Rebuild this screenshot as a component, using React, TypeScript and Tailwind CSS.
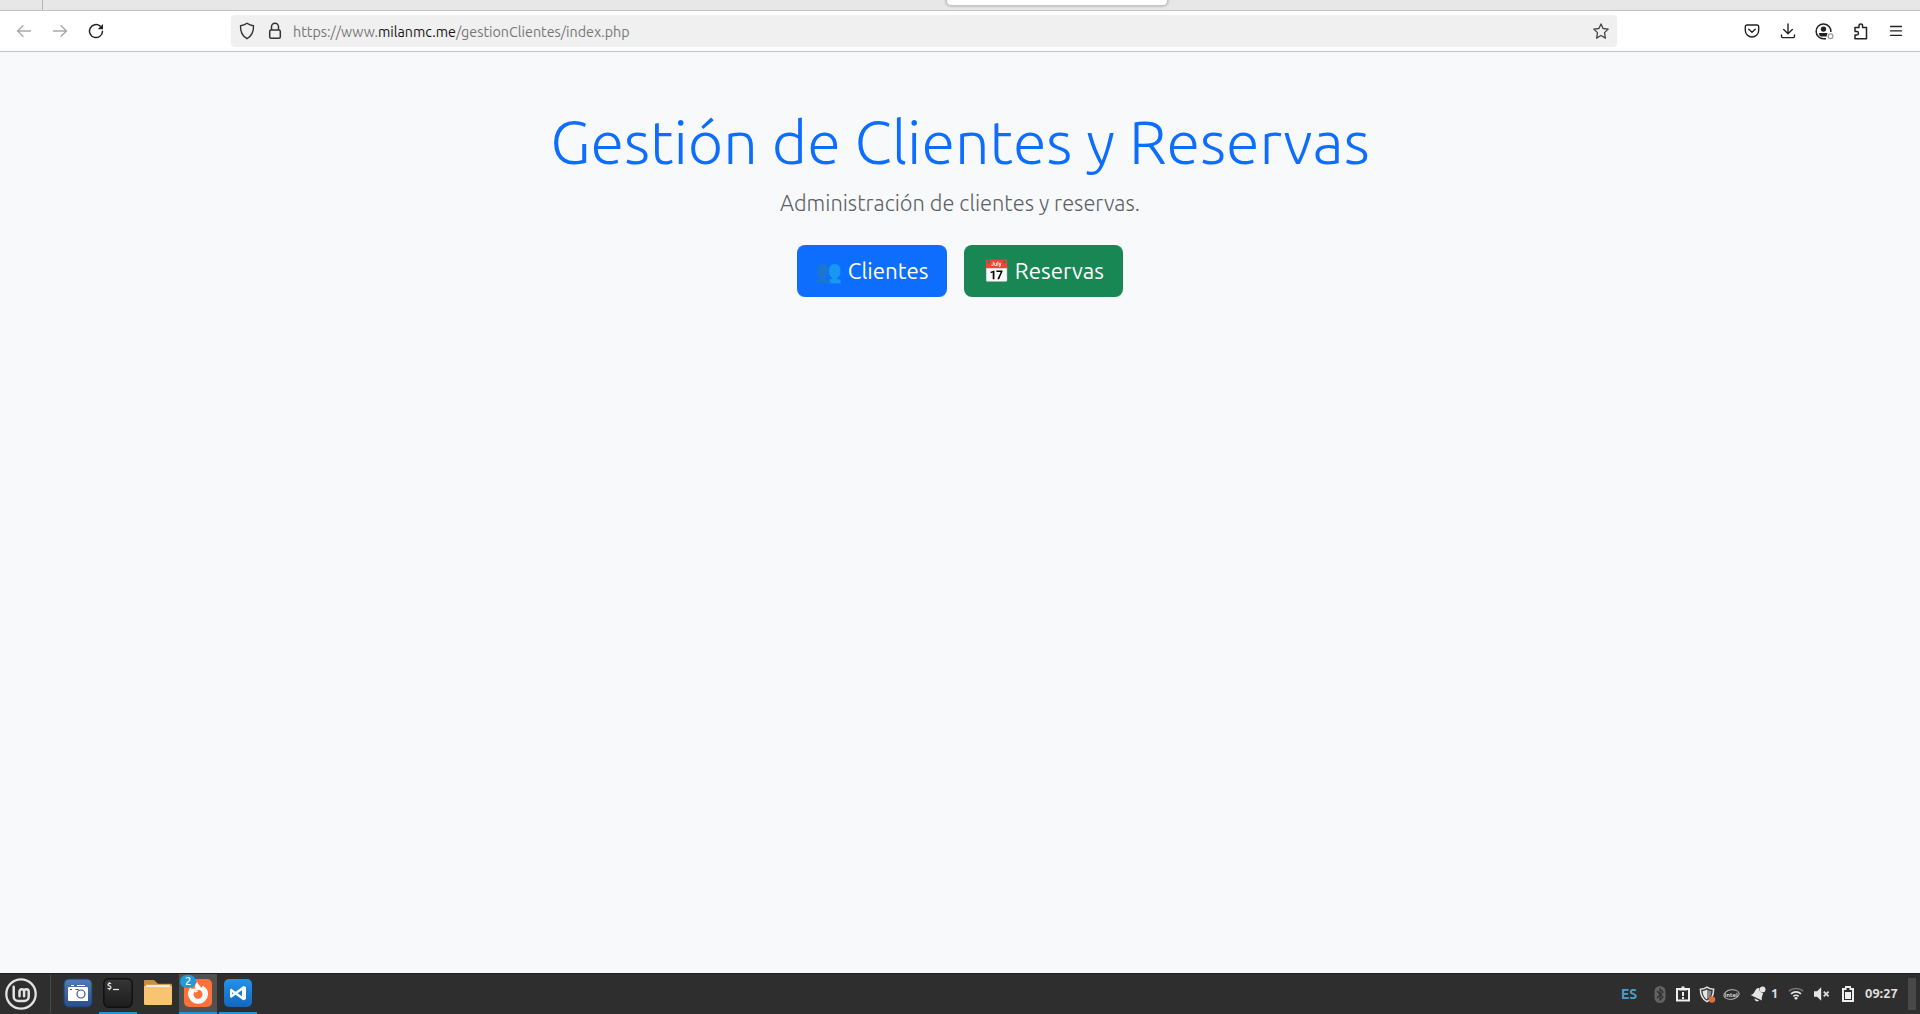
import React from "react";

function BrowserBar() {
  return (
    <header className="h-[52px] shrink-0 bg-white">
      <div className="relative h-[11px] overflow-hidden border-b border-[#c3c3c3] bg-[#e7e7e7]">
        <div className="ml-[42px] h-[10px] w-px bg-[#b5b5b5]" />
        <div className="absolute -top-5 left-[946px] h-[26px] w-[222px] rounded-[5px] border border-[#c4c4c4] bg-white shadow-[0_0_3px_rgba(0,0,0,0.3)]" />
      </div>
      <div className="flex h-[41px] items-center border-b border-[#c3c3c3]">
        <nav className="flex w-[231px] items-center gap-5 pl-4">
          <svg width="16" height="16" viewBox="0 0 16 16" fill="none" stroke="#a9a9a9" strokeWidth="1.4" strokeLinecap="round" strokeLinejoin="round"><path d="M14.5 8H1.7M7 2.7 1.5 8 7 13.3" /></svg>
          <svg width="16" height="16" viewBox="0 0 16 16" fill="none" stroke="#a9a9a9" strokeWidth="1.4" strokeLinecap="round" strokeLinejoin="round"><path d="M1.5 8h12.8M9 2.7 14.5 8 9 13.3" /></svg>
          <svg width="16" height="16" viewBox="0 0 16 16" fill="none" stroke="#222" strokeWidth="1.5" strokeLinecap="round"><path d="M12.2 3.1A6.5 6.5 0 1 0 14.5 8.2" /><path d="M15 1v5.3H9.7z" fill="#222" stroke="none" /></svg>
        </nav>
        <div className="flex h-8 w-[1386px] items-center rounded bg-[#f0f0f0] pl-2 pr-2">
          <svg width="16" height="18" viewBox="0 0 16 18" fill="none" stroke="#333" strokeWidth="1.4" strokeLinejoin="round"><path d="M8 1.2c2 1.5 4.2 2.3 6.5 2.6.2 5.3-1.2 9.9-6.5 12.9C2.700 13.700 1.300 9.100 1.500 3.800 3.800 3.500 6 2.700 8 1.200z" /></svg>
          <svg className="ml-3" width="16" height="18" viewBox="0 0 16 18" fill="none" stroke="#333" strokeWidth="1.5"><rect x="2.700" y="8" width="10.600" height="8.300" rx="1.500" /><path d="M4.500 8V4.700a3.500 3.500 0 0 1 7 0V8" /></svg>
          <span className="ml-[10px] whitespace-nowrap pt-[2px] text-[14.3px] leading-5 text-[#777]">https://www.<span className="text-[#161616]">milanmc.me</span>/gestionClientes/index.php</span>
          <svg className="ml-auto" width="16" height="16" viewBox="0 0 16 16" fill="none" stroke="#444" strokeWidth="1.3" strokeLinejoin="round"><path d="m8 .9 2.100 4.600 5.100.6-3.700 3.500.9 5.500L8 12.500l-4.400 2.600.9-5.500L.8 6.100l5.100-.6z" /></svg>
        </div>
        <div className="flex items-center gap-5 pl-[127px]">
          <svg width="16" height="16" viewBox="0 0 16 16" fill="none" stroke="#222" strokeWidth="1.400" strokeLinecap="round" strokeLinejoin="round"><path d="M3 2h10a1.700 1.700 0 0 1 1.700 1.700v3.600a6.700 6.700 0 0 1-13.400 0V3.700A1.700 1.700 0 0 1 3 2z" /><path d="m4.700 6.300 3.300 3 3.300-3" /></svg>
          <svg width="16" height="16" viewBox="0 0 16 16" fill="none" stroke="#222" strokeWidth="1.400" strokeLinecap="round" strokeLinejoin="round"><path d="M8 1v9.700M3.700 6.500 8 10.800l4.300-4.300M1.500 12v1.300A1.300 1.300 0 0 0 2.800 14.600h10.400a1.300 1.300 0 0 0 1.300-1.300V12" /></svg>
          <svg className="-ml-px mr-px" width="19" height="17" viewBox="0 0 19 17" fill="none"><path d="M15.900 9A7.400 7.400 0 1 0 9 15.700h2" stroke="#222" strokeWidth="1.500" /><circle cx="8.500" cy="6.100" r="2.700" fill="#222" /><path d="M4 10h8.500l-1 3.500H6C4.500 13.500 3.900 11 4 10z" fill="#222" /><circle cx="15.500" cy="13.200" r="2.400" stroke="#999" strokeWidth="1.200" fill="#fff" /></svg>
          <svg className="-ml-[2px]" width="16" height="17" viewBox="0 0 16 17" fill="none" stroke="#222" strokeWidth="1.500" strokeLinejoin="round"><path d="M2 5.500V4.600H6V2.900a1.800 1.800 0 0 1 3.600 0v1.700h3.900v11.200H2v-3.900h1.800a1.600 1.600 0 0 0 0-3.300H2z" /></svg>
          <svg className="-ml-px" width="16" height="16" viewBox="0 0 16 16" stroke="#222" strokeWidth="1.300" strokeLinecap="round"><path d="M2.500 3.500h11M2.500 7.900h11M2.500 12.300h11" /></svg>
        </div>
      </div>
    </header>
  );
}

function Taskbar() {
  return (
    <footer className="flex h-[41px] shrink-0 items-stretch border-t border-[#202020] bg-[#2e2e2e]">
      <div className="flex w-[50px] items-center pl-[5px]">
        <svg width="32" height="32" viewBox="0 0 32 32" fill="none" stroke="#e3e3e3" strokeLinecap="round" strokeLinejoin="round"><circle cx="16" cy="16" r="14.700" strokeWidth="2.300" /><path d="M8.700 8.700v9.800a4.500 4.500 0 0 0 4.500 4.500h6a4.500 4.500 0 0 0 4.500-4.500v-5a2.300 2.300 0 0 0-4.600 0v4.700M19.100 13.500a2.300 2.300 0 0 0-4.600 0v4.700" strokeWidth="2.500" /></svg>
      </div>
      <div className="my-[1px] w-px bg-[#484848]" />
      <div className="ml-2 flex">
        <div className="flex w-[38px] justify-center pt-1">
          <svg width="30" height="30" viewBox="0 0 30 30"><defs><linearGradient id="camera" x2="0" y2="1"><stop stopColor="#537bb8" /><stop offset="1" stopColor="#294d8a" /></linearGradient></defs><rect x="1" y="1" width="28" height="28" rx="5" fill="url(#camera)" stroke="#203f73" /><path d="M6 9h18a1 1 0 0 1 1 1v13H6a1 1 0 0 1-1-1V10a1 1 0 0 1 1-1zM8 7h3v1H8zM14 7h8v1h-8z" fill="#fff" /><circle cx="18" cy="16" r="4" fill="#fff" stroke="#315894" strokeWidth="1.200" /><path d="M7 11.500h2M12.500 11.500h3" stroke="#315894" /></svg>
        </div>
        <div className="ml-[2px] flex w-[38px] justify-center border-b-2 border-[#2493d1] pt-1">
          <svg width="30" height="30" viewBox="0 0 30 30"><defs><linearGradient id="terminal" x2="0" y2="1"><stop stopColor="#363636" /><stop offset="1" stopColor="#1d1d1d" /></linearGradient></defs><rect x=".8" y=".8" width="28.400" height="28.400" rx="5" fill="url(#terminal)" stroke="#111" strokeWidth="1.500" /><text x="4" y="10.500" fontSize="8.500" fontWeight="700" fill="#eee">$</text><path d="M10 11.500h6" stroke="#eee" strokeWidth="1.200" /></svg>
        </div>
        <div className="ml-[2px] flex w-[38px] justify-center pt-1">
          <svg width="30" height="30" viewBox="0 0 30 30"><path d="M1 3a1 1 0 0 1 1-1h9l4 3.800h13a1 1 0 0 1 1 1V13H1z" fill="#cc8c39" /><path d="M3 6.800h24v4H3z" fill="#f1f0ed" /><path d="M1 8h2l1 1h22l1-1h2v17.700a1.300 1.300 0 0 1-1.300 1.300H2.300A1.300 1.300 0 0 1 1 25.700z" fill="#f8c471" /></svg>
        </div>
        <div className="relative ml-[2px] flex w-[38px] justify-center border-b-2 border-[#2493d1] bg-[#515151] pt-1">
          <svg width="30" height="30" viewBox="0 0 30 30"><rect x="1" y="1" width="28" height="28" rx="5" fill="#ff7139" /><path d="M14.300 4c.6 2.600 3.100 3.900 3.900 6.100l1.600-2.300c3.700 2 5.700 5.200 5.200 9a10 10 0 0 1-19.900 0c-.2-3.300 1-6.300 2.800-8.300l.6 2.600 4.100-.8c-1.200-2-.2-4.700 1.700-6.300z" fill="#fff" /><circle cx="15" cy="16.300" r="4.500" fill="#ff7139" /><path d="m10.300 12.300 5.300.2-2.800 2.200z" fill="#fff" /></svg>
          <span className="absolute left-[1px] top-[1px] flex h-[13px] w-4 items-center justify-center rounded-full bg-[#239bd8] text-[11px] font-medium leading-none text-white">2</span>
        </div>
        <div className="ml-[2px] flex w-[38px] justify-center border-b-2 border-[#2493d1] pt-1">
          <svg width="30" height="30" viewBox="0 0 30 30"><defs><linearGradient id="code" x2="0" y2="1"><stop stopColor="#2492ea" /><stop offset="1" stopColor="#1368bd" /></linearGradient></defs><rect x="1" y="1" width="28" height="28" rx="5" fill="url(#code)" /><path d="m8 12 13 9.200M8 18.500 21 9.200" stroke="#fff" strokeWidth="2.500" /><path d="M19 9.300 20.500 8 23 9v12l-2.500 1.300L19 20.500zM7 11.500l2-1v9.500l-2-1z" fill="#fff" /></svg>
        </div>
      </div>

      <div className="ml-auto flex items-center text-white">
        <span className="w-[33px] text-[14px] font-bold text-[#4b9dcc]">ES</span>
        <svg width="12" height="17" viewBox="0 0 12 17"><rect x=".5" width="11" height="17" rx="5.500" fill="#626262" /><path d="m3 5 6 6-3 3V3l3 3-6 6" fill="none" stroke="#2e2e2e" strokeWidth="1.100" /></svg>
        <svg className="ml-[9px]" width="16" height="18" viewBox="0 0 16 18"><path d="M2 4h12v11.500H2z" fill="none" stroke="#eee" strokeWidth="2" /><path d="M4 3h2.500V1.500h3V3H12v2.500H4zM7 7h2v4H7zM7 12h2v2H7z" fill="#eee" /></svg>
        <svg className="ml-[8px]" width="17" height="17" viewBox="0 0 17 17"><path d="M8 1.100c2 1.500 4.200 2 6.600 2.100 0 6.100-1.700 9.800-6.600 12.500C3.100 13 1.400 9.300 1.400 3.200 3.800 3.100 6 2.600 8 1.100z" fill="none" stroke="#e5e5e5" strokeWidth="1.500" /><path d="M8 3.500v10c-3-2-4.300-4.500-4.400-8.600C5.300 4.700 6.800 4.300 8 3.500z" fill="#e5e5e5" /><path d="M8 3.500v10c3-2 4.300-4.500 4.400-8.600-1.700-.2-3.200-.6-4.400-1.400z" fill="#888" /><circle cx="13" cy="13.500" r="3.200" fill="#e07036" /></svg>
        <svg className="ml-[7px]" width="17" height="13" viewBox="0 0 17 13"><ellipse cx="8.500" cy="6.500" rx="7.700" ry="4.700" fill="none" stroke="#bbb" transform="rotate(-9 8.500 6.500)" /><text x="8.300" y="8.700" textAnchor="middle" fontSize="6" fontWeight="700" fill="#ddd">intel</text></svg>
        <svg className="ml-[10px]" width="16" height="16" viewBox="0 0 16 16" fill="#e5e5e5"><path d="M.5 9C4 8.500 4.500 5 6.100 3.200c.9-1 2.200-1.400 3.500-.9A3.600 3.600 0 0 0 13 7c-.2 2.500-2 4.500-1 7.500zM4.500 12.500l4.500 2c-1.500 1.700-4.500.8-4.500-2z" /><circle cx="12.600" cy="3.400" r="2.900" /></svg>
        <span className="ml-[5px] w-[7px] text-[13px] font-bold text-[#e0e0e0]">1</span>
        <svg className="ml-[10px]" width="16" height="14" viewBox="0 0 16 14" fill="none" stroke="#e5e5e5" strokeWidth="1.600"><path d="M.8 4.200a11 11 0 0 1 14.400 0" stroke="#777" /><path d="M3 6.800a7.500 7.500 0 0 1 10 0M5.300 9.400a4.200 4.200 0 0 1 5.400 0" /><path d="m8 13-2-2a3 3 0 0 1 4 0z" fill="#e5e5e5" stroke="none" /></svg>
        <svg className="ml-[10px]" width="16" height="14" viewBox="0 0 16 14"><path d="M0 4.300h3L7.200.2v13.600L3 9.700H0z" fill="#e5e5e5" /><path d="m9.800 4.600 4.800 4.800m0-4.800L9.800 9.400" stroke="#ddd" strokeWidth="1.800" /></svg>
        <svg className="ml-[12px]" width="12" height="16" viewBox="0 0 12 16"><path d="M3 0h6v2h3v14H0V2h3zm-1 4v10h8V4H7.500V2h-3v2z" fill="#eee" fillRule="evenodd" /><path d="M3 6h6v7H3z" fill="#eee" /></svg>
        <span className="ml-[11px] w-[35px] whitespace-nowrap text-[13px] font-bold tracking-[0.1px] text-[#e0e0e0]">09:27</span>
        <div className="ml-[8px] mr-1 h-8 w-2 bg-[#484848]" />
      </div>
    </footer>
  );
}

export default function App() {
  return (
    <div className="flex h-screen w-full flex-col overflow-hidden bg-[#f8f9fa] font-['Ubuntu','Noto_Sans','Noto_Color_Emoji',sans-serif]">
      <BrowserBar />
      <main className="flex min-h-0 flex-1 flex-col items-center pt-[53px]">
        <h1 className="whitespace-nowrap text-[61.1px] font-light leading-[73px] text-[#0d6efd]">Gestión de Clientes y Reservas</h1>
        <p className="mt-2 whitespace-nowrap text-[21.82px] font-light leading-[34px] text-[#5c6166]">Administración de clientes y reservas.</p>
        <div className="mt-[25px] flex gap-[17px]">
          <a className="flex h-[52px] w-[150px] items-center justify-center whitespace-nowrap rounded-lg bg-[#0d6efd] text-[21.82px] text-white">👥<span className="ml-[5px] text-[22.3px]">Clientes</span></a>
          <a className="flex h-[52px] w-[159px] items-center justify-center whitespace-nowrap rounded-lg bg-[#198754] text-[21.82px] text-white">📅<span className="ml-[4.5px] text-[22.3px]">Reservas</span></a>
        </div>
      </main>
      <Taskbar />
    </div>
  );
}
